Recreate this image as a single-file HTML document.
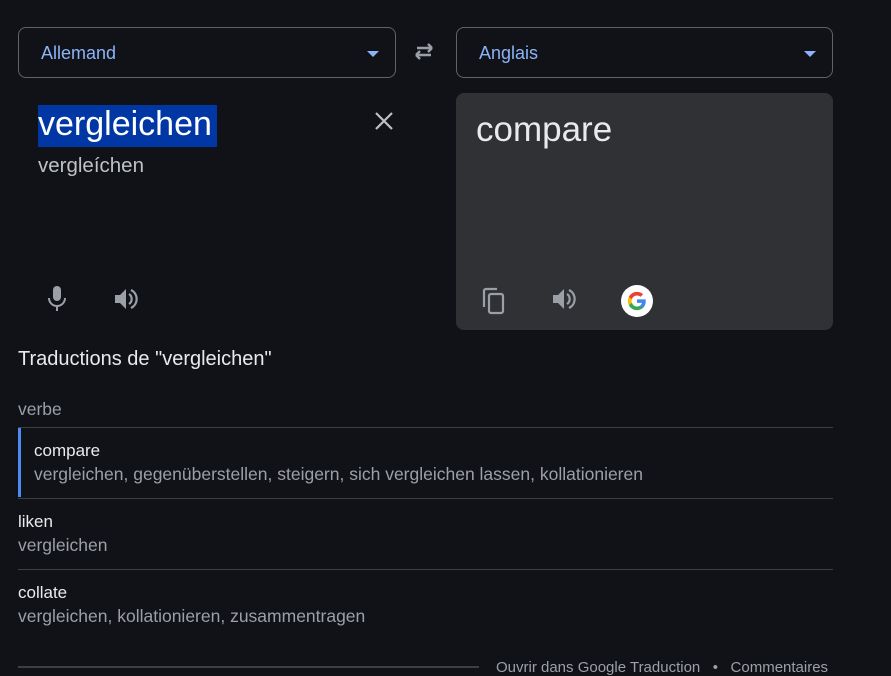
<!DOCTYPE html>
<html><head><style>
body{margin:0;width:891px;height:672px;background:#111217;font-family:"Liberation Sans",Arial,sans-serif;position:relative;overflow:hidden}
.a{position:absolute;white-space:nowrap}
.dd{position:absolute;top:27px;height:51px;border:1px solid #5f6368;border-radius:8px;box-sizing:border-box}
.dd span{position:absolute;left:22px;top:15px;font-size:18px;color:#8ab4f8}
.dd i{position:absolute;right:16px;top:23px;width:0;height:0;border-left:6px solid transparent;border-right:6px solid transparent;border-top:6px solid #8ab4f8}
.hr{position:absolute;left:18px;width:815px;height:1px;background:#3c4043}
.t{font-size:17px;color:#e8eaed}
.s{font-size:17.5px;color:#9aa0a6}
</style></head><body>
<div class="dd" style="left:18px;width:378px"><span>Allemand</span><i></i></div>
<svg class="a" style="left:412px;top:42px" width="24" height="20" viewBox="0 0 24 20"><path d="M4 13h15M4 13l4-4M4 13l4 4M20 6H5M20 6l-4-4M20 6l-4 4" stroke="#9aa0a6" stroke-width="2.4" fill="none"/></svg>
<div class="dd" style="left:456px;width:377px"><span>Anglais</span><i></i></div>

<div class="a" style="left:38px;top:105px;width:179px;height:42px;background:#0037a4"></div>
<div class="a" style="left:38px;top:105px;font-size:34px;color:#fff">vergleichen</div>
<div class="a" style="left:38px;top:154px;font-size:20.5px;color:#bdc1c6">vergleíchen</div>
<svg class="a" style="left:374px;top:111px" width="20" height="20"><path d="M2 2L18 18M18 2L2 18" stroke="#bdc1c6" stroke-width="2.2"/></svg>
<svg class="a" style="left:46px;top:286px" width="22" height="26" viewBox="0 0 22 26"><rect x="7" y="0" width="8" height="15" rx="4" fill="#9aa0a6"/><path d="M3 12a8 8 0 0 0 16 0M11 20v5" stroke="#9aa0a6" stroke-width="2" fill="none"/></svg>
<svg class="a" style="left:114px;top:287px" width="26" height="24" viewBox="0 0 26 24"><path d="M1 8h5l6-6v20l-6-6H1z" fill="#9aa0a6"/><path d="M15 7a6 6 0 0 1 0 10" stroke="#9aa0a6" stroke-width="2.2" fill="none"/><path d="M17 3a10 10 0 0 1 0 18" stroke="#9aa0a6" stroke-width="2.2" fill="none"/></svg>

<div class="a" style="left:456px;top:93px;width:377px;height:237px;background:#303134;border-radius:8px"></div>
<div class="a" style="left:476px;top:110px;font-size:35px;color:#e8eaed">compare</div>
<svg class="a" style="left:482px;top:287px" width="24" height="28" viewBox="0 0 24 28"><path d="M2 20V4a2 2 0 0 1 2-2h11" stroke="#9aa0a6" stroke-width="2.2" fill="none"/><rect x="7" y="7" width="14" height="19" rx="2" stroke="#9aa0a6" stroke-width="2.2" fill="none"/></svg>
<svg class="a" style="left:552px;top:287px" width="26" height="24" viewBox="0 0 26 24"><path d="M1 8h5l6-6v20l-6-6H1z" fill="#9aa0a6"/><path d="M15 7a6 6 0 0 1 0 10" stroke="#9aa0a6" stroke-width="2.2" fill="none"/><path d="M17 3a10 10 0 0 1 0 18" stroke="#9aa0a6" stroke-width="2.2" fill="none"/></svg>
<div class="a" style="left:621px;top:285px;width:32px;height:32px;border-radius:50%;background:#fff"></div>
<svg class="a" style="left:627px;top:291px" width="20" height="20" viewBox="0 0 48 48"><path fill="#4285F4" d="M45 24.5c0-1.6-.1-3.1-.4-4.5H24v8.5h11.8c-.5 2.7-2 5-4.4 6.6v5.5h7.1c4.1-3.800 6.5-9.4 6.5-16.1z"/><path fill="#34A853" d="M24 46c5.9 0 10.9-2 14.5-5.4l-7.1-5.5c-2 1.3-4.5 2.1-7.4 2.1-5.7 0-10.6-3.9-12.3-9.1H4.4v5.7C8 41 15.4 46 24 46z"/><path fill="#FBBC05" d="M11.7 28.1c-.4-1.3-.7-2.7-.7-4.1s.3-2.8.7-4.1v-5.700H4.4C2.9 17.2 2 20.5 2 24s.9 6.8 2.4 9.8z"/><path fill="#EA4335" d="M24 10.8c3.2 0 6.1 1.1 8.4 3.3l6.3-6.3C34.9 4.2 29.9 2 24 2 15.4 2 8 7 4.4 14.2l7.3 5.7c1.7-5.2 6.6-9.1 12.3-9.1z"/></svg>

<div class="a" style="left:18px;top:348px;font-size:20px;color:#e8eaed">Traductions de "vergleichen"</div>
<div class="a s" style="left:18px;top:399px">verbe</div>
<div class="hr" style="top:427px"></div>
<div class="a" style="left:18px;top:428px;width:3px;height:69px;background:#4c8bf5"></div>
<div class="a t" style="left:34px;top:441px">compare</div>
<div class="a s" style="left:34px;top:464px">vergleichen, gegenüberstellen, steigern, sich vergleichen lassen, kollationieren</div>
<div class="hr" style="top:498px"></div>
<div class="a t" style="left:18px;top:512px">liken</div>
<div class="a s" style="left:18px;top:535px">vergleichen</div>
<div class="hr" style="top:569px"></div>
<div class="a t" style="left:18px;top:583px">collate</div>
<div class="a s" style="left:18px;top:606px">vergleichen, kollationieren, zusammentragen</div>
<div class="a" style="left:18px;top:666px;width:461px;height:2px;background:#3c4043"></div>
<div class="a" style="left:496px;top:659px;font-size:15px;color:#9aa0a6">Ouvrir dans Google Traduction &nbsp; • &nbsp; Commentaires</div>
</body></html>
